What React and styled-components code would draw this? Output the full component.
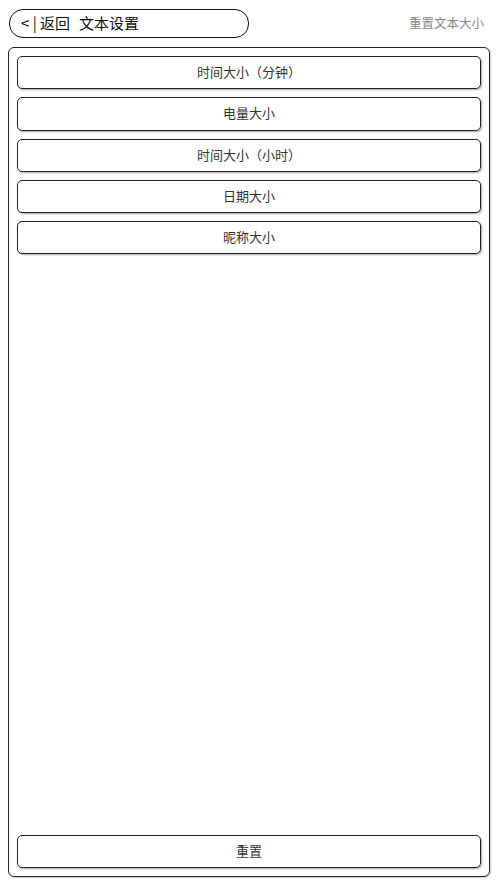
import React from 'react';
import styled, { createGlobalStyle } from 'styled-components';

const GlobalStyle = createGlobalStyle`
  html, body {
    margin: 0;
    padding: 0;
    background: #ffffff;
    font-family: "Noto Sans CJK SC", "Noto Sans", sans-serif;
  }
`;

const Page = styled.div`
  box-sizing: border-box;
  height: 100vh;
  padding: 9px 8px 8px 8px;
  display: flex;
  flex-direction: column;
  gap: 9px;
`;

const TopBar = styled.div`
  display: flex;
  align-items: center;
  justify-content: space-between;
  height: 29px;
`;

const BackPill = styled.div`
  box-sizing: border-box;
  width: 240px;
  height: 29px;
  margin-left: 1px;
  border: 1px solid #111;
  border-radius: 14px;
  display: flex;
  align-items: center;
  padding: 0 0 2px 11px;
  font-size: 15px;
  color: #111;
  white-space: pre;
`;

const PageTitle = styled.span`
  margin-left: 9px;
`;

const ResetAll = styled.div`
  font-size: 12.5px;
  color: #888;
  padding: 0 6px 2px 0;
`;

const Panel = styled.div`
  flex: 1;
  box-sizing: border-box;
  border: 1px solid #222;
  border-radius: 6px;
  padding: 8px;
  display: flex;
  flex-direction: column;
  gap: 8px;
  box-shadow: 1px 1px 2px rgba(0, 0, 0, 0.2);
`;

const OptionButton = styled.div`
  box-sizing: border-box;
  height: 33.25px;
  flex-shrink: 0;
  border: 1px solid #222;
  border-radius: 5px;
  box-shadow: 1px 1px 2px rgba(0, 0, 0, 0.35);
  display: flex;
  align-items: center;
  justify-content: center;
  padding-bottom: 2px;
  font-size: 13px;
  color: #333;
  margin-top: ${(p) => (p.$bottom ? 'auto' : '0')};
`;

const options = ['时间大小（分钟）', '电量大小', '时间大小（小时）', '日期大小', '昵称大小'];

export default function App() {
  return (
    <>
      <GlobalStyle />
      <Page>
        <TopBar>
          <BackPill>
            {'< | 返回'}
            <PageTitle>文本设置</PageTitle>
          </BackPill>
          <ResetAll>重置文本大小</ResetAll>
        </TopBar>
        <Panel>
          {options.map((o) => (
            <OptionButton key={o}>{o}</OptionButton>
          ))}
          <OptionButton $bottom>重置</OptionButton>
        </Panel>
      </Page>
    </>
  );
}
